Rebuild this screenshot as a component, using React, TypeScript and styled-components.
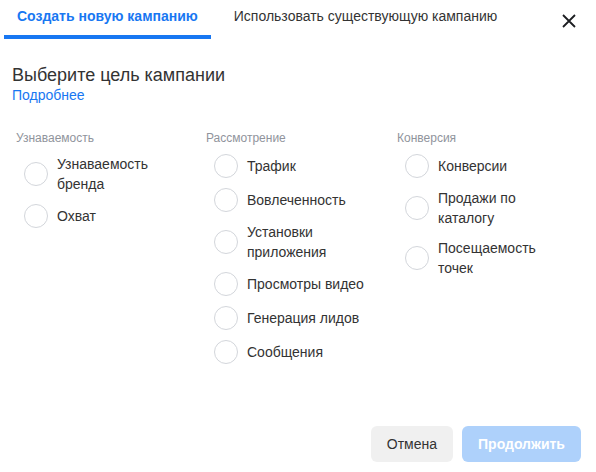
import React from "react";
import styled, { createGlobalStyle } from "styled-components";

const Global = createGlobalStyle`
  html, body { margin: 0; padding: 0; background: #fff; }
  body { font-family: "Liberation Sans", Arial, sans-serif; }
  * { box-sizing: border-box; }
`;

const Dialog = styled.div`
  width: 596px;
  height: 472px;
  display: flex;
  flex-direction: column;
  background: #fff;
`;

const TabBar = styled.div`
  display: flex;
  align-items: stretch;
  height: 39px;
  padding-left: 4px;
  padding-right: 18px;
`;

const Tab = styled.div<{ $active?: boolean }>`
  display: flex;
  align-items: center;
  padding: 0 13px 4px;
  margin-right: 10px;
  font-size: 14px;
  font-weight: ${(p) => (p.$active ? 700 : 400)};
  color: ${(p) => (p.$active ? "#1877f2" : "#333")};
  border-bottom: 4px solid ${(p) => (p.$active ? "#1877f2" : "transparent")};
  white-space: nowrap;
`;

const Spacer = styled.div`
  flex: 1;
`;

const CloseButton = styled.button`
  border: 0;
  background: none;
  padding: 0;
  margin-top: 12px;
  width: 18px;
  height: 18px;
  display: flex;
  align-items: center;
  justify-content: center;
  align-self: flex-start;
  cursor: pointer;
`;

const Body = styled.div`
  flex: 1;
  padding: 25px 12px 0;
`;

const Title = styled.div`
  font-size: 18px;
  line-height: 22px;
  color: #333;
`;

const Link = styled.a`
  display: block;
  font-size: 14px;
  line-height: 18px;
  color: #1877f2;
  text-decoration: none;
`;

const Columns = styled.div`
  display: grid;
  grid-template-columns: 190px 191px 180px;
  margin-top: 26px;
  padding-left: 4px;
`;

const Column = styled.div`
  display: flex;
  flex-direction: column;
`;

const Heading = styled.div`
  font-size: 12px;
  line-height: 16px;
  color: #90949c;
  margin-bottom: 8px;
`;

const Options = styled.div`
  display: flex;
  flex-direction: column;
  gap: 10px;
`;

const Option = styled.label`
  display: flex;
  align-items: center;
  padding-left: 8px;
  min-height: 24px;
  cursor: pointer;
`;

const Radio = styled.span`
  width: 24px;
  height: 24px;
  flex: none;
  border-radius: 50%;
  border: 1px solid #d3d6db;
  background: #fff;
  margin-right: 9px;
`;

const OptionText = styled.span`
  font-size: 14px;
  line-height: 20px;
  color: #333;
  max-width: 120px;
`;

const Footer = styled.div`
  display: flex;
  justify-content: flex-end;
  gap: 9px;
  padding: 0 15px 10px;
`;

const Button = styled.button<{ $primary?: boolean }>`
  height: 36px;
  padding: 0 16px;
  border: 0;
  border-radius: 6px;
  font-family: "Liberation Sans", Arial, sans-serif;
  font-size: 14px;
  font-weight: ${(p) => (p.$primary ? 700 : 400)};
  color: ${(p) => (p.$primary ? "#fff" : "#333")};
  background: ${(p) => (p.$primary ? "#aed1fb" : "#f0f0f0")};
  min-width: ${(p) => (p.$primary ? 119 : 81)}px;
`;

const groups: { title: string; items: string[] }[] = [
  { title: "Узнаваемость", items: ["Узнаваемость бренда", "Охват"] },
  {
    title: "Рассмотрение",
    items: [
      "Трафик",
      "Вовлеченность",
      "Установки приложения",
      "Просмотры видео",
      "Генерация лидов",
      "Сообщения",
    ],
  },
  {
    title: "Конверсия",
    items: ["Конверсии", "Продажи по каталогу", "Посещаемость точек"],
  },
];

export default function App() {
  return (
    <>
      <Global />
      <Dialog>
        <TabBar>
          <Tab $active>Создать новую кампанию</Tab>
          <Tab>Использовать существующую кампанию</Tab>
          <Spacer />
          <CloseButton aria-label="Закрыть">
            <svg width="14" height="14" viewBox="0 0 14 14">
              <path d="M1 1L13 13M13 1L1 13" stroke="#1c1e21" strokeWidth="1.8" />
            </svg>
          </CloseButton>
        </TabBar>
        <Body>
          <Title>Выберите цель кампании</Title>
          <Link href="#">Подробнее</Link>
          <Columns>
            {groups.map((g) => (
              <Column key={g.title}>
                <Heading>{g.title}</Heading>
                <Options>
                  {g.items.map((it) => (
                    <Option key={it}>
                      <Radio />
                      <OptionText>{it}</OptionText>
                    </Option>
                  ))}
                </Options>
              </Column>
            ))}
          </Columns>
        </Body>
        <Footer>
          <Button>Отмена</Button>
          <Button $primary>Продолжить</Button>
        </Footer>
      </Dialog>
    </>
  );
}
